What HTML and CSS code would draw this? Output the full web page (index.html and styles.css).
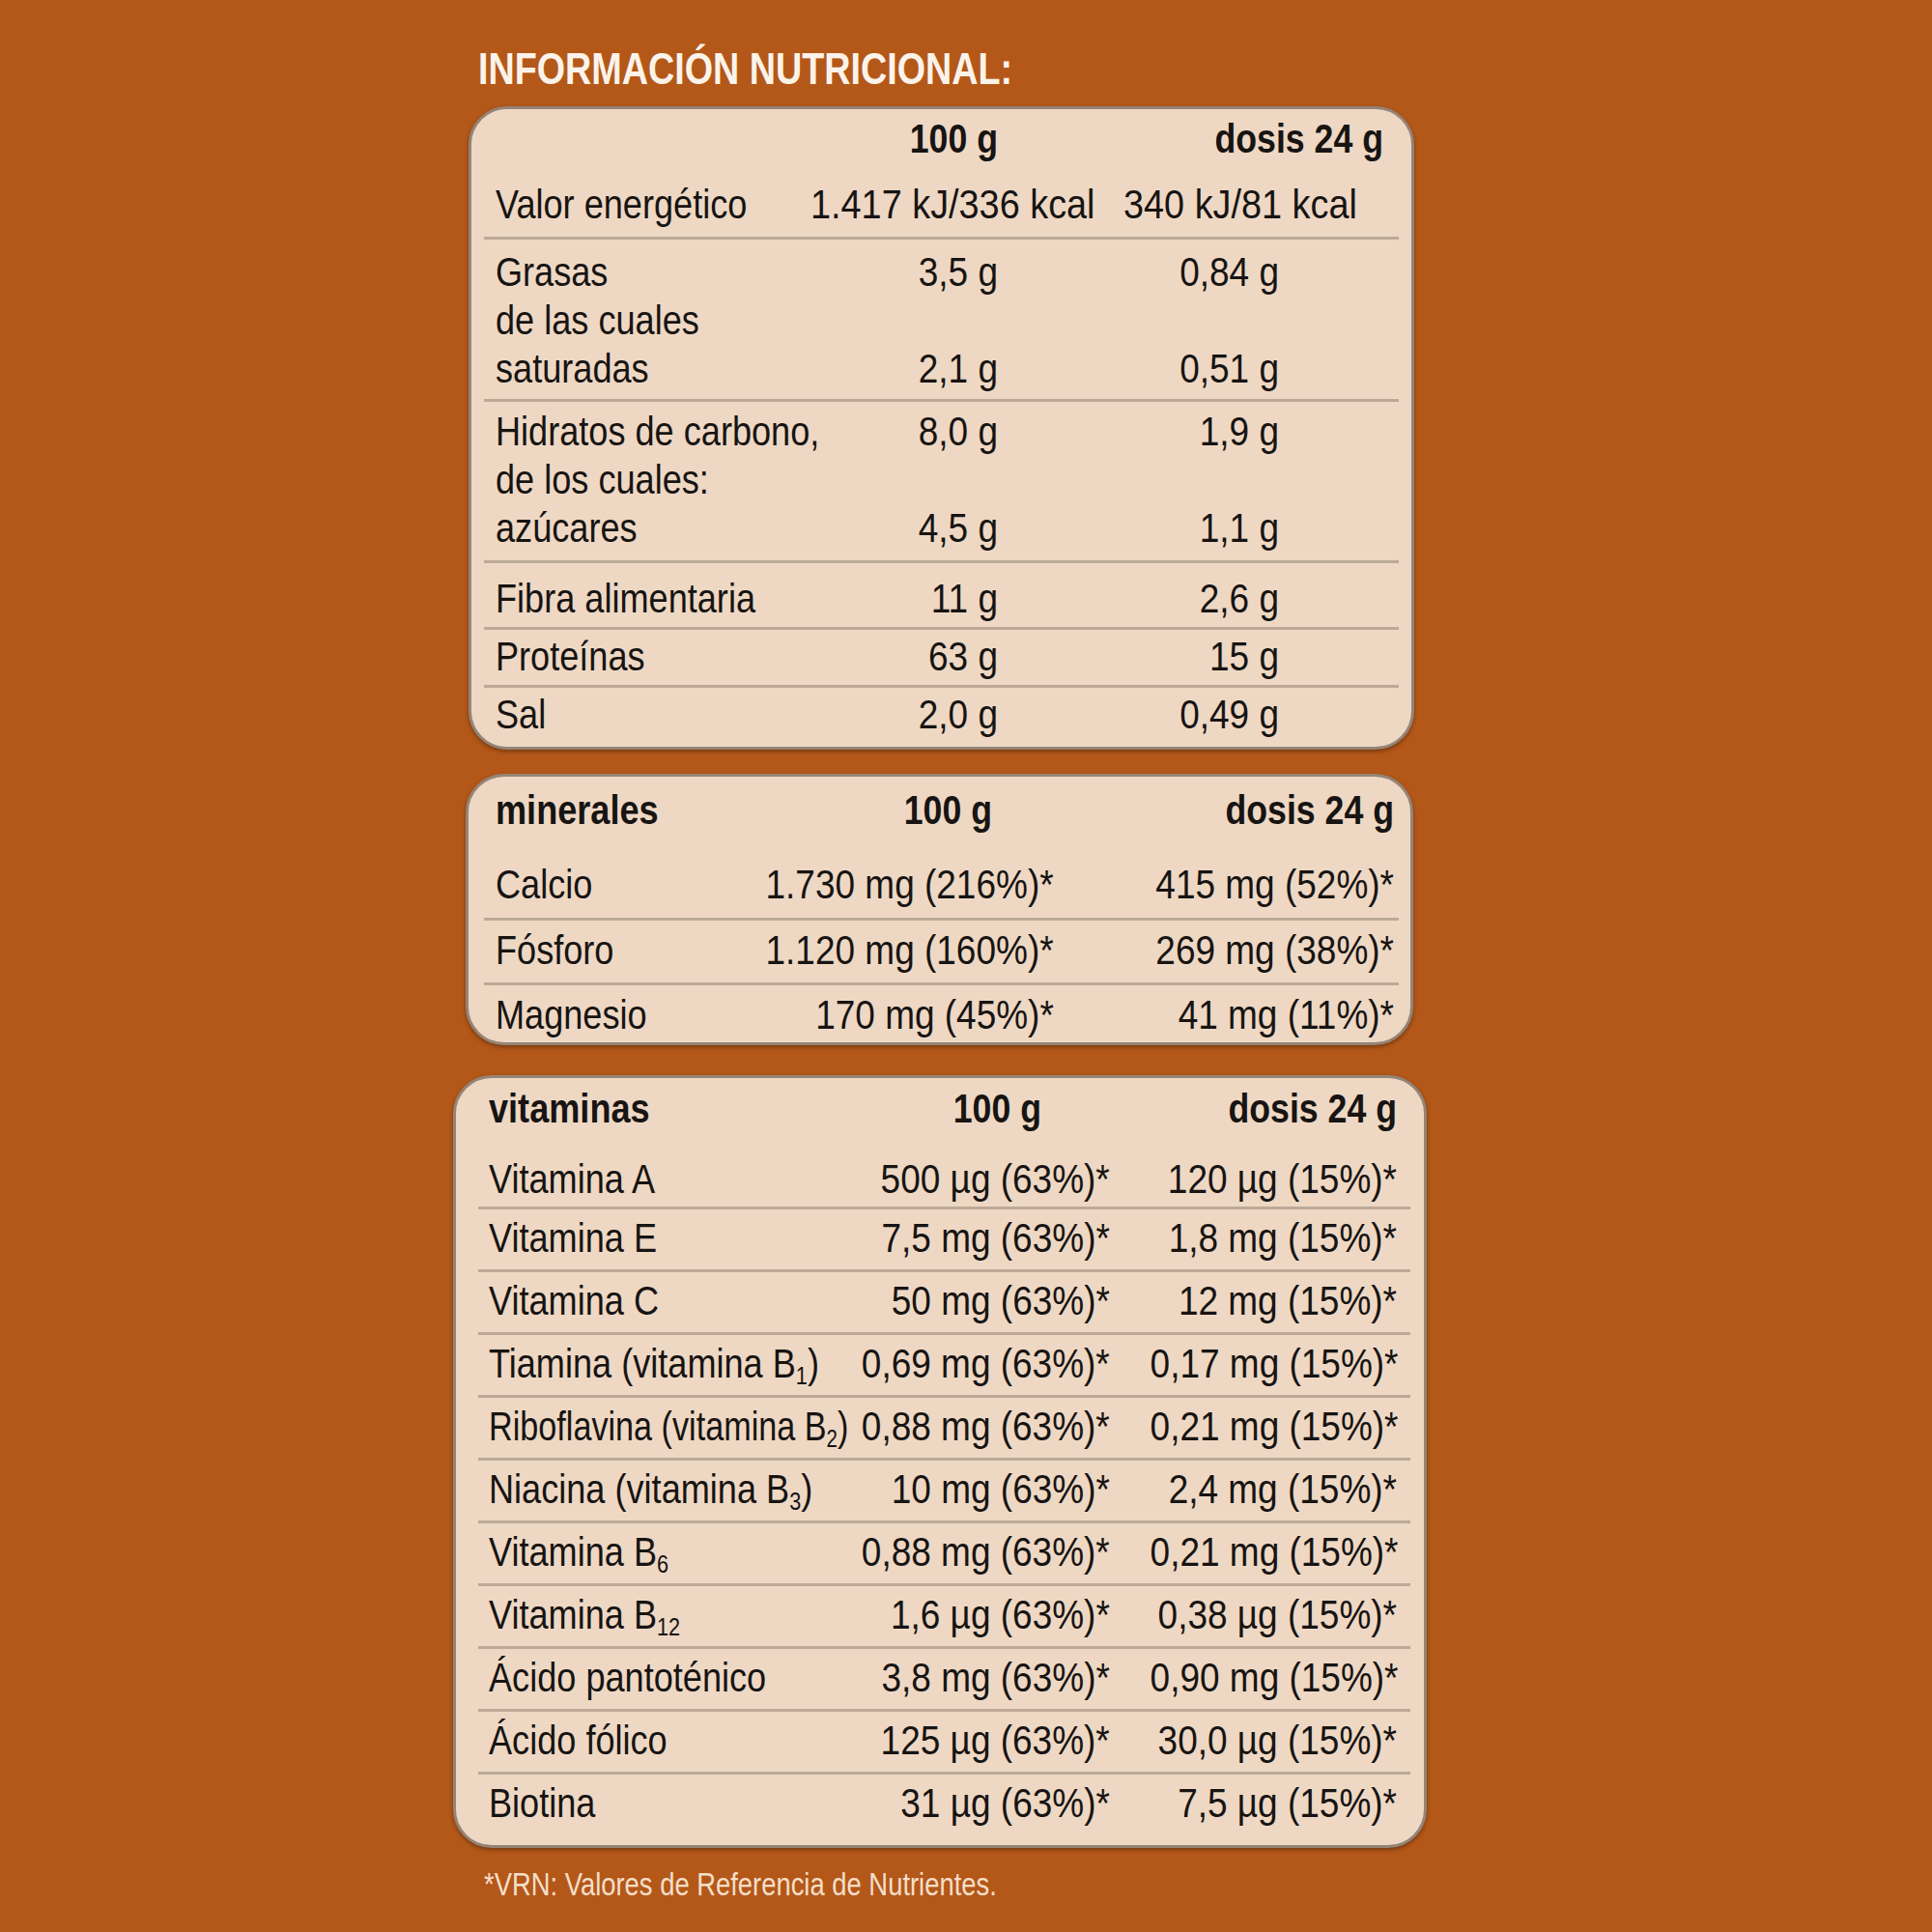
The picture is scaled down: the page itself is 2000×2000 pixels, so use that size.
FILE: index.html
```html
<!DOCTYPE html>
<html lang="es">
<head>
<meta charset="utf-8">
<title>Información nutricional</title>
<link rel="stylesheet" href="styles.css">
</head>
<body>
<main class="page">
  <h1 class="title">INFORMACIÓN NUTRICIONAL:</h1>

  <section class="box box-main">
    <div class="row head">
      <span class="lbl"></span>
      <span class="v2">100 g</span>
      <span class="v3">dosis 24 g</span>
    </div>
    <div class="row energy">
      <span class="lbl">Valor energético</span>
      <span class="e2">1.417 kJ/336 kcal</span>
      <span class="e3">340 kJ/81 kcal</span>
    </div>
    <div class="row multi first-multi">
      <span class="lbl">Grasas<br>de las cuales<br>saturadas</span>
      <span class="v2">3,5 g<br>&nbsp;<br>2,1 g</span>
      <span class="v3">0,84 g<br>&nbsp;<br>0,51 g</span>
    </div>
    <div class="row multi second-multi">
      <span class="lbl">Hidratos de carbono,<br>de los cuales:<br>azúcares</span>
      <span class="v2">8,0 g<br>&nbsp;<br>4,5 g</span>
      <span class="v3">1,9 g<br>&nbsp;<br>1,1 g</span>
    </div>
    <div class="row single fibra">
      <span class="lbl">Fibra alimentaria</span>
      <span class="v2">11 g</span>
      <span class="v3">2,6 g</span>
    </div>
    <div class="row single prot">
      <span class="lbl">Proteínas</span>
      <span class="v2">63 g</span>
      <span class="v3">15 g</span>
    </div>
    <div class="row single last">
      <span class="lbl">Sal</span>
      <span class="v2">2,0 g</span>
      <span class="v3">0,49 g</span>
    </div>
  </section>

  <section class="box box-min">
    <div class="row head">
      <span class="lbl">minerales</span>
      <span class="v2">100 g</span>
      <span class="v3">dosis 24 g</span>
    </div>
    <div class="row first">
      <span class="lbl">Calcio</span>
      <span class="v2">1.730 mg (216%)*</span>
      <span class="v3">415 mg (52%)*</span>
    </div>
    <div class="row">
      <span class="lbl">Fósforo</span>
      <span class="v2">1.120 mg (160%)*</span>
      <span class="v3">269 mg (38%)*</span>
    </div>
    <div class="row last">
      <span class="lbl">Magnesio</span>
      <span class="v2">170 mg (45%)*</span>
      <span class="v3">41 mg (11%)*</span>
    </div>
  </section>

  <section class="box box-vit">
    <div class="row head">
      <span class="lbl">vitaminas</span>
      <span class="v2">100 g</span>
      <span class="v3">dosis 24 g</span>
    </div>
    <div class="row first">
      <span class="lbl">Vitamina A</span>
      <span class="v2">500 µg (63%)*</span>
      <span class="v3">120 µg (15%)*</span>
    </div>
    <div class="row">
      <span class="lbl">Vitamina E</span>
      <span class="v2">7,5 mg (63%)*</span>
      <span class="v3">1,8 mg (15%)*</span>
    </div>
    <div class="row">
      <span class="lbl">Vitamina C</span>
      <span class="v2">50 mg (63%)*</span>
      <span class="v3">12 mg (15%)*</span>
    </div>
    <div class="row">
      <span class="lbl">Tiamina (vitamina B<sub>1</sub>)</span>
      <span class="v2">0,69 mg (63%)*</span>
      <span class="v3">0,17 mg (15%)*</span>
    </div>
    <div class="row">
      <span class="lbl tight">Riboflavina (vitamina B<sub>2</sub>)</span>
      <span class="v2">0,88 mg (63%)*</span>
      <span class="v3">0,21 mg (15%)*</span>
    </div>
    <div class="row">
      <span class="lbl">Niacina (vitamina B<sub>3</sub>)</span>
      <span class="v2">10 mg (63%)*</span>
      <span class="v3">2,4 mg (15%)*</span>
    </div>
    <div class="row">
      <span class="lbl">Vitamina B<sub>6</sub></span>
      <span class="v2">0,88 mg (63%)*</span>
      <span class="v3">0,21 mg (15%)*</span>
    </div>
    <div class="row">
      <span class="lbl">Vitamina B<sub>12</sub></span>
      <span class="v2">1,6 µg (63%)*</span>
      <span class="v3">0,38 µg (15%)*</span>
    </div>
    <div class="row">
      <span class="lbl">Ácido pantoténico</span>
      <span class="v2">3,8 mg (63%)*</span>
      <span class="v3">0,90 mg (15%)*</span>
    </div>
    <div class="row">
      <span class="lbl">Ácido fólico</span>
      <span class="v2">125 µg (63%)*</span>
      <span class="v3">30,0 µg (15%)*</span>
    </div>
    <div class="row last">
      <span class="lbl">Biotina</span>
      <span class="v2">31 µg (63%)*</span>
      <span class="v3">7,5 µg (15%)*</span>
    </div>
  </section>

  <p class="note">*VRN: Valores de Referencia de Nutrientes.</p>
</main>
</body>
</html>
```

FILE: styles.css
```css
html, body {
  margin: 0;
  padding: 0;
}

body {
  width: 2000px;
  height: 2000px;
  background: #b45819;
  font-family: "Liberation Sans", Arial, sans-serif;
  color: #171412;
}

.page {
  display: flex;
  flex-direction: column;
  align-items: flex-start;
  padding-top: 46px;
}

/* condensed look: the reference uses a condensed grotesque */
.title,
.note,
.lbl, .v2, .v3, .e2, .e3 {
  white-space: nowrap;
  transform: scaleX(0.84);
  transform-origin: left center;
}

.lbl.tight {
  transform: scaleX(0.795);
}

.title {
  margin: 0 0 14px 495px;
  font-size: 46px;
  line-height: 50px;
  font-weight: 700;
  color: #fbf3ea;
  transform: scaleX(0.82);
}

.box {
  box-sizing: border-box;
  background: #eed8c4;
  border: 3px solid #958476;
  border-radius: 40px;
  box-shadow: 0 2px 4px rgba(40, 20, 5, 0.45);
  font-size: 43px;
  line-height: 50px;
}

.row {
  display: grid;
  align-items: start;
  border-bottom: 3px solid #bca997;
}

.row.last,
.row.head {
  border-bottom: none;
}

.head {
  font-weight: 700;
}

.v2, .v3 {
  text-align: right;
  transform-origin: right center;
  transform: scaleX(0.86);
}

.e2, .e3 {
  transform: scaleX(0.88);
}

.head .v2,
.head .v3 {
  transform: scaleX(0.83);
}

sub {
  font-size: 60%;
  line-height: 0;
  vertical-align: -0.28em;
}

/* ---------- box 1 ---------- */
.box-main {
  margin-left: 485px;
  width: 979px;
  height: 666px;
}

.box-main .row {
  margin: 0 13px;
  padding: 0 16px 0 12px;
  grid-template-columns: 326px 194px minmax(0, 1fr);
}

.box-main .v3 {
  margin-right: 108px;
}

.box-main .head {
  padding-top: 5px;
  height: 60px;
}

.box-main .head .v3 {
  margin-right: 0;
}

.box-main .energy {
  grid-template-columns: 326px 324px auto;
  padding-top: 8px;
  height: 59px;
}

.box-main .first-multi {
  padding-top: 8px;
  padding-bottom: 7px;
}

.box-main .second-multi {
  padding-top: 5px;
  padding-bottom: 9px;
}

.box-main .fibra {
  padding-top: 11px;
  padding-bottom: 5px;
}

.box-main .prot {
  padding-top: 2px;
  padding-bottom: 5px;
}

.box-main .single.last {
  padding-top: 2px;
}

/* ---------- box 2 ---------- */
.box-min {
  margin-top: 25px;
  margin-left: 482px;
  width: 981px;
  height: 281px;
}

.box-min .row {
  margin: 0 12px 0 16px;
  padding: 0 5px 0 12px;
  grid-template-columns: minmax(0, 1fr) auto 352px;
}

.box-min .head {
  padding-top: 9px;
  height: 59px;
}

.box-min .head .v2 {
  margin-right: 64px;
}

.box-min .first {
  padding-top: 18px;
  padding-bottom: 10px;
}

.box-min .row:not(.head):not(.first) {
  padding-top: 5px;
  padding-bottom: 9px;
}

.box-min .row.last {
  padding-top: 3px;
}

/* ---------- box 3 ---------- */
.box-vit {
  margin-top: 31px;
  margin-left: 469px;
  width: 1008px;
  height: 800px;
}

.box-vit .row {
  margin: 0 14px 0 23px;
  padding: 0 14px 0 11px;
  grid-template-columns: minmax(0, 1fr) auto 297px;
}

.box-vit .head {
  padding-top: 6px;
  height: 56px;
}

.box-vit .head .v2 {
  margin-right: 71px;
}

.box-vit .first {
  padding-top: 17px;
  padding-bottom: 4px;
}

.box-vit .row:not(.head):not(.first) {
  padding-top: 4px;
  padding-bottom: 8px;
}

.box-vit .row.last {
  padding-top: 11px;
}

.note {
  margin: 18px 0 0 501px;
  font-size: 33px;
  line-height: 40px;
  color: #f4dfca;
  transform: scaleX(0.83);
}
```
